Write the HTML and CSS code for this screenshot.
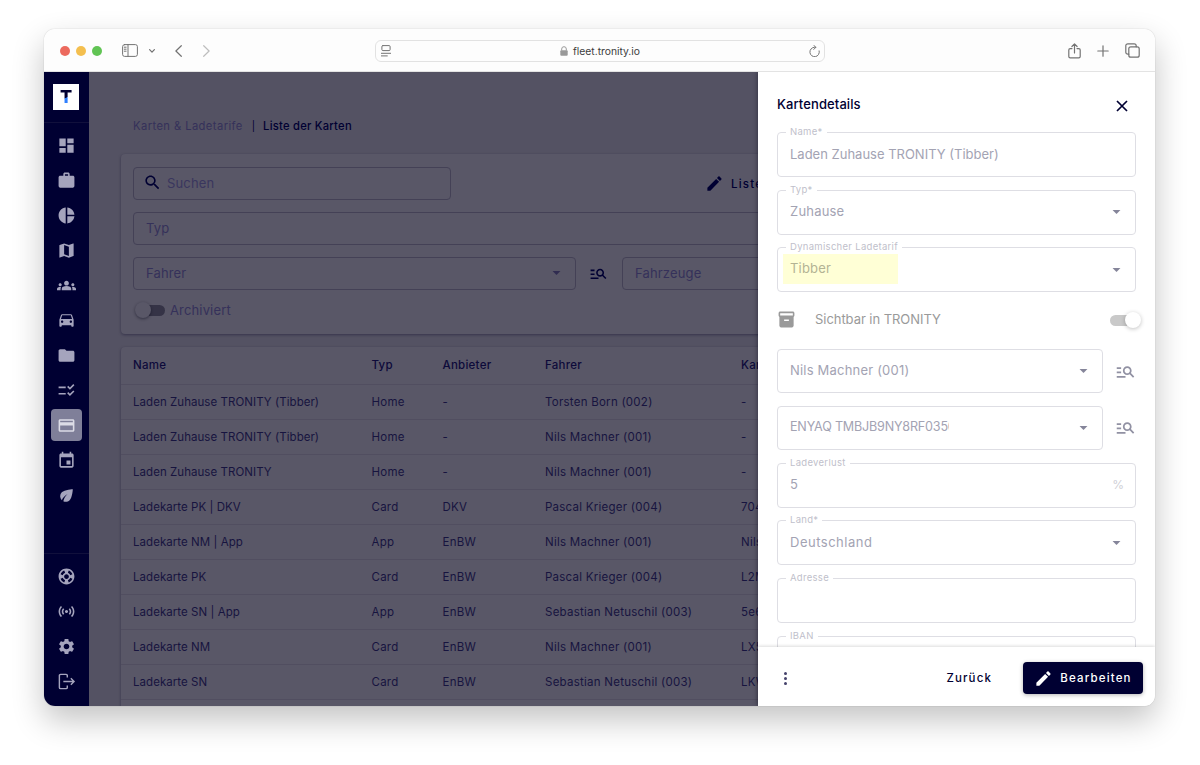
FILE: index.html
```
<!DOCTYPE html>
<html lang="de">
<head>
    <meta charset="UTF-8">
    <title>TRONITY Fleet - Liste der Karten</title>
    <link rel="stylesheet" href="styles.css">
</head>

<body>
<svg class="sprite" aria-hidden="true">
    <symbol id="edit" viewBox="0 0 24 24"><path d="M3 17.25V21h3.75L17.81 9.94l-3.75-3.75L3 17.25zM20.71 7.04c.39-.39.39-1.02 0-1.41l-2.34-2.34c-.39-.39-1.02-.39-1.41 0l-1.83 1.83 3.75 3.75 1.83-1.83z"/></symbol>
    <symbol id="manage-search" viewBox="0 0 24 24"><path d="M7 9H2V7h5v2zm0 3H2v2h5v-2zm13.59 7l-3.83-3.83c-.8.52-1.74.83-2.76.83-2.76 0-5-2.24-5-5s2.24-5 5-5 5 2.24 5 5c0 1.02-.31 1.96-.83 2.75L22 17.59 20.59 19zM17 11c0-1.65-1.35-3-3-3s-3 1.35-3 3 1.35 3 3 3 3-1.35 3-3zM2 19h10v-2H2v2z"/></symbol>
    <symbol id="arrow" viewBox="0 0 24 24"><path d="M7 10l5 5 5-5z"/></symbol>
</svg>

<div class="window">
    <header class="toolbar">
        <div class="toolbar-left">
            <span class="dot red"></span>
            <span class="dot yellow"></span>
            <span class="dot green"></span>
            <svg class="line panel-icon" viewBox="0 0 16 13"><rect x=".6" y=".6" width="14.8" height="11.8" rx="2"/><path d="M6 .6v11.8M2.3 3.2h1.8M2.3 5.2h1.8M2.3 7.2h1.8"/></svg>
            <svg class="line chevron" viewBox="0 0 6 4"><path d="M.6.6L3 3.2 5.4.6"/></svg>
            <svg class="line back" viewBox="0 0 7 12"><path d="M6.3.7L.9 6l5.4 5.3"/></svg>
            <svg class="line forward" viewBox="0 0 7 12"><path d="M.7.7L6.1 6 .7 11.3"/></svg>
        </div>
        <div class="address">
            <svg class="line reader" viewBox="0 0 10 12"><rect x=".9" y=".6" width="8.2" height="5" rx="1"/><path d="M.3 8.3h9.4M.3 10.9h6"/></svg>
            <span class="url">
                <svg class="lock" viewBox="0 0 8 10"><path d="M1.7 4.5V3a2.3 2.3 0 0 1 4.6 0v1.5" fill="none" stroke="#999" stroke-width="1"/><rect x=".3" y="4.2" width="7.4" height="5.6" rx="1"/></svg>
                fleet.tronity.io
            </span>
            <svg class="line reload" viewBox="0 0 11 12"><path d="M10.2 5.9A4.7 4.7 0 1 1 5.5 2.300h1.300M4.800.4l2.100 1.900-2.100 2.100"/></svg>
        </div>
        <div class="toolbar-right">
            <svg class="line share" viewBox="0 0 13 16"><path d="M4 5.6H2.2A1.4 1.4 0 0 0 .8 7v6.4c0 .8.6 1.4 1.4 1.4h8.6c.8 0 1.4-.6 1.4-1.4V7c0-.8-.6-1.4-1.4-1.4H9M6.5 10V1M3.9 3.5L6.5.9l2.6 2.6"/></svg>
            <svg class="line plus" viewBox="0 0 12 12"><path d="M6 .8v10.4M.8 6h10.4"/></svg>
            <svg class="line tabs" viewBox="0 0 15 15"><rect x="3.8" y="3.8" width="10.4" height="10.4" rx="2"/><path d="M3.8 11.2h-1a2 2 0 0 1-2-2V2.8a2 2 0 0 1 2-2h6.4a2 2 0 0 1 2 2v1"/></svg>
        </div>
    </header>

    <div class="app">
        <nav class="sidebar">
            <div class="logo-wrap"><div class="logo"><span>T</span></div></div>
            <div class="nav-main">
                <a class="nav-item"><svg viewBox="0 0 24 24"><path d="M3 13h8V3H3v10zm0 8h8v-6H3v6zm10 0h8V11h-8v10zm0-18v6h8V3h-8z"/></svg></a>
                <a class="nav-item"><svg viewBox="0 0 24 24"><path d="M20 6h-4V4c0-1.11-.89-2-2-2h-4c-1.11 0-2 .89-2 2v2H4c-1.11 0-1.99.89-1.99 2L2 19c0 1.11.89 2 2 2h16c1.11 0 2-.89 2-2V8c0-1.11-.89-2-2-2zm-6 0h-4V4h4v2z"/></svg></a>
                <a class="nav-item"><svg viewBox="0 0 24 24"><path d="M11 2v20c-5.07-.5-9-4.79-9-10s3.93-9.5 9-10zm2.03 0v8.99H22c-.47-4.74-4.24-8.52-8.97-8.99zm0 11.01V22c4.74-.47 8.5-4.25 8.97-8.99h-8.97z"/></svg></a>
                <a class="nav-item"><svg viewBox="0 0 24 24"><path d="M20.5 3l-.16.03L15 5.1 9 3 3.36 4.9c-.21.07-.36.25-.36.48V20.5c0 .28.22.5.5.5l.16-.03L9 18.9l6 2.1 5.64-1.9c.21-.07.36-.25.36-.48V3.5c0-.28-.22-.5-.5-.5zM15 19l-6-2.11V5l6 2.11V19z"/></svg></a>
                <a class="nav-item"><svg viewBox="0 0 24 24"><path d="M12 12.75c1.63 0 3.07.39 4.24.9 1.08.48 1.76 1.56 1.76 2.73V18H6v-1.61c0-1.18.68-2.26 1.76-2.73 1.17-.52 2.61-.91 4.24-.91zM4 13c1.1 0 2-.9 2-2s-.9-2-2-2-2 .9-2 2 .9 2 2 2zm1.13 1.1c-.37-.06-.74-.1-1.13-.1-.99 0-1.93.21-2.78.58C.48 14.9 0 15.62 0 16.43V18h4.5v-1.61c0-.83.23-1.61.63-2.29zM20 13c1.1 0 2-.9 2-2s-.9-2-2-2-2 .9-2 2 .9 2 2 2zm4 3.43c0-.81-.48-1.53-1.22-1.85-.85-.37-1.79-.58-2.78-.58-.39 0-.76.04-1.13.1.4.68.63 1.46.63 2.29V18H24v-1.57zM12 6c1.66 0 3 1.34 3 3s-1.34 3-3 3-3-1.34-3-3 1.34-3 3-3z"/></svg></a>
                <a class="nav-item"><svg viewBox="0 0 24 24"><path d="M18.92 5.01C18.72 4.42 18.16 4 17.5 4h-11c-.66 0-1.21.42-1.42 1.01L3 11v8c0 .55.45 1 1 1h1c.55 0 1-.45 1-1v-1h12v1c0 .55.45 1 1 1h1c.55 0 1-.45 1-1v-8l-2.08-5.99zM6.5 15c-.83 0-1.5-.67-1.5-1.5S5.67 12 6.5 12s1.5.67 1.5 1.5S7.33 15 6.5 15zm11 0c-.83 0-1.5-.67-1.5-1.5s.67-1.5 1.5-1.5 1.5.67 1.5 1.5-.67 1.5-1.5 1.5zM5 10l1.5-4.5h11L19 10H5z"/></svg></a>
                <a class="nav-item"><svg viewBox="0 0 24 24"><path d="M10 4H4c-1.1 0-1.99.9-1.99 2L2 18c0 1.1.9 2 2 2h16c1.1 0 2-.9 2-2V8c0-1.1-.9-2-2-2h-8l-2-2z"/></svg></a>
                <a class="nav-item"><svg viewBox="0 0 24 24"><path d="M11 7H2v2h9V7zM11 15H2v2h9v-2zM16.34 11l-3.54-3.54 1.41-1.41 2.12 2.12 4.24-4.24L22 5.34 16.34 11zm0 8l-3.54-3.54 1.41-1.41 2.12 2.12 4.24-4.24L22 13.34 16.34 19z"/></svg></a>
                <a class="nav-item active"><svg viewBox="0 0 24 24"><path d="M20 4H4c-1.11 0-1.99.89-1.99 2L2 18c0 1.11.89 2 2 2h16c1.11 0 2-.89 2-2V6c0-1.11-.89-2-2-2zm0 14H4v-6h16v6zm0-10H4V6h16v2z"/></svg></a>
                <a class="nav-item"><svg viewBox="0 0 24 24"><path d="M17 12h-5v5h5v-5zM16 1v2H8V1H6v2H5c-1.11 0-1.99.9-1.99 2L3 19c0 1.1.89 2 2 2h14c1.1 0 2-.9 2-2V5c0-1.1-.9-2-2-2h-1V1h-2zm3 18H5V8h14v11z"/></svg></a>
                <a class="nav-item"><svg viewBox="0 0 24 24"><path d="M6.05 8.05c-2.73 2.73-2.73 7.15-.02 9.88 1.47-3.4 4.09-6.24 7.36-7.93-2.77 2.34-4.71 5.61-5.39 9.32 2.6 1.23 5.8.78 7.95-1.37C19.43 14.47 20 4 20 4S9.53 4.57 6.05 8.05z"/></svg></a>
            </div>
            <div class="nav-bottom">
                <a class="nav-item"><svg viewBox="0 0 24 24"><path d="M12 2C6.48 2 2 6.48 2 12s4.48 10 10 10 10-4.48 10-10S17.52 2 12 2zm7.46 7.12l-2.78 1.15c-.51-1.36-1.58-2.44-2.95-2.94l1.15-2.78c2.1.8 3.77 2.47 4.58 4.57zM12 15c-1.66 0-3-1.34-3-3s1.34-3 3-3 3 1.34 3 3-1.34 3-3 3zM9.13 4.54l1.17 2.78c-1.38.5-2.47 1.59-2.98 2.97L4.54 9.13c.81-2.11 2.48-3.78 4.59-4.59zM4.54 14.87l2.78-1.15c.51 1.38 1.59 2.46 2.97 2.96l-1.17 2.78c-2.1-.81-3.77-2.48-4.58-4.59zm10.34 4.59l-1.15-2.78c1.37-.51 2.45-1.59 2.95-2.97l2.78 1.17c-.81 2.1-2.48 3.77-4.58 4.58z"/></svg></a>
                <a class="nav-item"><svg viewBox="0 0 24 24"><path d="M7.76 16.24C6.67 15.16 6 13.66 6 12s.67-3.16 1.76-4.24l1.42 1.42C8.45 9.9 8 10.9 8 12c0 1.1.45 2.1 1.17 2.83l-1.41 1.41zm8.48 0C17.33 15.16 18 13.66 18 12s-.67-3.16-1.76-4.24l-1.42 1.42C15.55 9.9 16 10.9 16 12c0 1.1-.45 2.1-1.17 2.83l1.41 1.41zM12 10c-1.1 0-2 .9-2 2s.9 2 2 2 2-.9 2-2-.9-2-2-2zm8 2c0 2.21-.9 4.21-2.35 5.65l1.42 1.42C20.88 17.26 22 14.76 22 12s-1.12-5.26-2.93-7.07l-1.42 1.42C19.1 7.79 20 9.79 20 12zM6.35 6.35L4.93 4.93C3.12 6.74 2 9.24 2 12s1.12 5.26 2.93 7.07l1.42-1.42C4.9 16.21 4 14.21 4 12s.9-4.21 2.35-5.65z"/></svg></a>
                <a class="nav-item"><svg viewBox="0 0 24 24"><path d="M19.14 12.94c.04-.3.06-.61.06-.94 0-.32-.02-.64-.07-.94l2.03-1.58c.18-.14.23-.41.12-.61l-1.92-3.32c-.12-.22-.37-.29-.59-.22l-2.39.96c-.5-.38-1.03-.7-1.62-.94l-.36-2.54c-.04-.24-.24-.41-.48-.41h-3.84c-.24 0-.43.17-.47.41l-.36 2.54c-.59.24-1.13.57-1.62.94l-2.39-.96c-.22-.08-.47 0-.59.22L2.74 8.87c-.12.21-.08.47.12.61l2.03 1.58c-.05.3-.09.63-.09.94s.02.64.07.94l-2.03 1.58c-.18.14-.23.41-.12.61l1.92 3.32c.12.22.37.29.59.22l2.39-.96c.5.38 1.03.7 1.62.94l.36 2.54c.05.24.24.41.48.41h3.84c.24 0 .44-.17.47-.41l.36-2.54c.59-.24 1.13-.56 1.62-.94l2.39.96c.22.08.47 0 .59-.22l1.92-3.32c.12-.22.07-.47-.12-.61l-2.01-1.58zM12 15.6c-1.98 0-3.6-1.62-3.6-3.6s1.62-3.6 3.6-3.6 3.6 1.62 3.6 3.6-1.62 3.6-3.6 3.6z"/></svg></a>
                <a class="nav-item"><svg class="logout" viewBox="0 0 24 24"><path d="M13 7V4.500A1.500 1.500 0 0 0 11.500 3H4.500A1.500 1.500 0 0 0 3 4.500v15A1.500 1.500 0 0 0 4.500 21h7a1.500 1.500 0 0 0 1.500-1.500V17M8 12h13.500M17.500 8l4 4-4 4"/></svg></a>
            </div>
        </nav>

        <main class="content">
            <div class="breadcrumb"><span class="parent">Karten &amp; Ladetarife</span><span class="sep">|</span><span class="current">Liste der Karten</span></div>

            <section class="card filters">
                <div class="filter-row">
                    <div class="box search">
                        <svg class="icon" viewBox="0 0 24 24"><path d="M15.5 14h-.79l-.28-.27C15.41 12.59 16 11.11 16 9.5 16 5.91 13.09 3 9.5 3S3 5.91 3 9.5 5.91 16 9.5 16c1.61 0 3.09-.59 4.23-1.57l.27.28v.79l5 4.99L20.49 19l-4.99-5zm-6 0C7.01 14 5 11.99 5 9.5S7.01 5 9.5 5 14 7.01 14 9.5 11.99 14 9.5 14z"/></svg>
                        <span>Suchen</span>
                    </div>
                    <div class="edit-list"><svg class="icon"><use href="#edit"/></svg><span>Liste</span></div>
                </div>
                <div class="filter-row"><div class="box full">Typ</div></div>
                <div class="filter-row">
                    <div class="box driver"><span>Fahrer</span><svg class="icon arrow"><use href="#arrow"/></svg></div>
                    <svg class="icon find"><use href="#manage-search"/></svg>
                    <div class="box vehicles">Fahrzeuge</div>
                </div>
                <div class="archive"><span class="switch off"></span><span>Archiviert</span></div>
            </section>

            <section class="card table">
                <div class="row head"><span>Name</span><span>Typ</span><span>Anbieter</span><span>Fahrer</span><span>Kar</span></div>
                <div class="row"><span>Laden Zuhause TRONITY (Tibber)</span><span>Home</span><span>-</span><span>Torsten Born (002)</span><span>-</span></div>
                <div class="row"><span>Laden Zuhause TRONITY (Tibber)</span><span>Home</span><span>-</span><span>Nils Machner (001)</span><span>-</span></div>
                <div class="row"><span>Laden Zuhause TRONITY</span><span>Home</span><span>-</span><span>Nils Machner (001)</span><span>-</span></div>
                <div class="row"><span>Ladekarte PK | DKV</span><span>Card</span><span>DKV</span><span>Pascal Krieger (004)</span><span>704</span></div>
                <div class="row"><span>Ladekarte NM | App</span><span>App</span><span>EnBW</span><span>Nils Machner (001)</span><span>Nils</span></div>
                <div class="row"><span>Ladekarte PK</span><span>Card</span><span>EnBW</span><span>Pascal Krieger (004)</span><span>L2M</span></div>
                <div class="row"><span>Ladekarte SN | App</span><span>App</span><span>EnBW</span><span>Sebastian Netuschil (003)</span><span>5e6</span></div>
                <div class="row"><span>Ladekarte NM</span><span>Card</span><span>EnBW</span><span>Nils Machner (001)</span><span>LX5</span></div>
                <div class="row"><span>Ladekarte SN</span><span>Card</span><span>EnBW</span><span>Sebastian Netuschil (003)</span><span>LKW</span></div>
                <div class="row"></div>
            </section>
        </main>

        <aside class="drawer">
            <div class="drawer-head">
                <h1>Kartendetails</h1>
                <svg class="close" viewBox="0 0 12 12"><path d="M1 1l10 10M11 1L1 11"/></svg>
            </div>
            <div class="form">
                <div class="field"><label>Name*</label><span class="value long">Laden Zuhause TRONITY (Tibber)</span></div>
                <div class="field"><label>Typ*</label><span class="value">Zuhause</span><svg class="icon arrow"><use href="#arrow"/></svg></div>
                <div class="field"><label>Dynamischer Ladetarif</label><mark>Tibber</mark><svg class="icon arrow"><use href="#arrow"/></svg></div>
                <div class="visible">
                    <svg class="icon" viewBox="0 0 24 24"><path d="M20 2H4c-1 0-2 .9-2 2v3.010c0 .72.43 1.340 1 1.690V20c0 1.100 1.100 2 2 2h14c.9 0 2-.9 2-2V8.700c.57-.35 1-.97 1-1.690V4c0-1.100-1-2-2-2zm-5 12H9v-2h6v2zm5-7H4V4l16-.02V7z"/></svg>
                    <span>Sichtbar in TRONITY</span>
                    <span class="switch on"></span>
                </div>
                <div class="field-row">
                    <div class="field"><span class="value">Nils Machner (001)</span><svg class="icon arrow"><use href="#arrow"/></svg></div>
                    <svg class="icon find"><use href="#manage-search"/></svg>
                </div>
                <div class="field-row">
                    <div class="field"><span class="value clipped">ENYAQ TMBJB9NY8RF0350</span><svg class="icon arrow"><use href="#arrow"/></svg></div>
                    <svg class="icon find"><use href="#manage-search"/></svg>
                </div>
                <div class="field"><label>Ladeverlust</label><span class="value">5</span><span class="unit">%</span></div>
                <div class="field"><label>Land*</label><span class="value wide">Deutschland</span><svg class="icon arrow"><use href="#arrow"/></svg></div>
                <div class="field"><label>Adresse</label></div>
                <div class="field"><label>IBAN</label></div>
            </div>
            <footer class="actions">
                <span class="more"><i></i><i></i><i></i></span>
                <button class="btn">Zurück</button>
                <button class="btn primary"><svg class="icon"><use href="#edit"/></svg>Bearbeiten</button>
            </footer>
        </aside>
    </div>
</div>
</body>
</html>
```
FILE: styles.css
```
* {
    box-sizing: border-box;
}

body {
    margin: 0;
    height: 765px;
    overflow: hidden;
    padding: 29px 0 0 44px;
    background: #fff;
    font-family: Inter, "Open Sans", sans-serif;
    color: #000032;
}

svg {
    display: block;
    flex: none;
    fill: currentColor;
}

.sprite {
    display: none;
}

.window {
    width: 1111px;
    height: 677px;
    border-radius: 11px;
    overflow: hidden;
    box-shadow: 0 0 1px rgba(0, 0, 0, 0.35), 0 14px 32px rgba(0, 0, 0, 0.24);
}

/* browser toolbar */
.toolbar {
    height: 43px;
    display: grid;
    grid-template-columns: 331px 450px 1fr;
    align-items: center;
    background: #fdfdfd;
    border-bottom: 1px solid #e3e3e3;
    padding-top: 1px;
}

.line {
    fill: none;
    stroke: #737373;
    stroke-width: 1.2;
    stroke-linecap: round;
    stroke-linejoin: round;
}

.toolbar-left {
    display: flex;
    align-items: center;
    padding-left: 16px;
}

.dot {
    width: 10px;
    height: 10px;
    margin-right: 6px;
    border-radius: 50%;
}

.red { background: #ec6a5e; }
.yellow { background: #f4bf4f; }
.green { background: #61c454; }

.panel-icon {
    width: 16px;
    height: 13px;
    margin-left: 14px;
    stroke-width: 1;
}

.chevron {
    width: 6px;
    height: 4px;
    margin-left: 11px;
}

.back {
    width: 7px;
    height: 12px;
    margin-left: 20px;
}

.forward {
    width: 7px;
    height: 12px;
    margin-left: 21px;
    stroke: #bdbdbd;
}

.address {
    height: 22px;
    display: flex;
    align-items: center;
    justify-content: space-between;
    padding: 0 4px 0 5px;
    border: 1px solid #e2e2e2;
    border-radius: 6px;
}

.reader {
    width: 10px;
    height: 12px;
    stroke-width: 1;
}

.url {
    display: flex;
    align-items: center;
    gap: 5px;
    font-size: 10.3px;
    color: #3c3c3c;
}

.lock {
    width: 8px;
    height: 10px;
    fill: #999;
}

.reload {
    width: 11px;
    height: 12px;
    stroke-width: 1;
}

.toolbar-right {
    display: flex;
    align-items: center;
    justify-content: flex-end;
    padding-right: 15px;
}

.share { width: 13px; height: 16px; }
.plus { width: 12px; height: 12px; margin-left: 16px; }
.tabs { width: 15px; height: 15px; margin-left: 16px; }

.app {
    display: flex;
    height: 634px;
    overflow: hidden;
}

/* sidebar */
.sidebar {
    width: 45px;
    display: flex;
    flex-direction: column;
    background: #000032;
    color: #a5a4bd;
}

.logo-wrap {
    height: 51px;
    padding: 12px 0 0 9px;
    border-bottom: 1px solid #11103c;
}

.logo {
    width: 26px;
    height: 26px;
    display: grid;
    place-items: center;
    background: #fff;
}

.logo span {
    font-size: 18px;
    line-height: 20px;
    font-weight: 800;
    color: transparent;
    background: linear-gradient(155deg, #000032 52%, #2f80ff 54%);
    background-clip: text;
    -webkit-background-clip: text;
}

.nav-main {
    flex: 1;
    display: flex;
    flex-direction: column;
    align-items: center;
    gap: 3px;
    padding-top: 6px;
}

.nav-bottom {
    height: 153px;
    display: flex;
    flex-direction: column;
    align-items: center;
    gap: 3px;
    padding-top: 6px;
    border-top: 1px solid #11103c;
}

.nav-item {
    width: 31px;
    height: 32px;
    display: grid;
    place-items: center;
    border-radius: 4px;
}

.nav-item svg {
    width: 19px;
    height: 19px;
}

.nav-item.active {
    background: #7f7f99;
    color: #dcdce6;
}

.nav-item .logout {
    fill: none;
    stroke: currentColor;
    stroke-width: 1.8;
}

/* page behind the drawer */
.content {
    width: 669px;
    overflow: hidden;
    padding-left: 32px;
    background: #545263;
    color: #17143f;
}

.breadcrumb {
    display: flex;
    height: 82px;
    padding: 46px 0 0 12px;
    font-size: 11.2px;
    line-height: 16px;
    white-space: nowrap;
}

.parent { color: #35315a; letter-spacing: 0.42px; }
.sep { margin: 0 8px 0 9px; font-size: 10px; color: #000032; }
.current { color: #000032; font-weight: 500; letter-spacing: 0.25px; }

.card {
    width: 1000px;
    border-radius: 4px;
    background: #595767;
    box-shadow: 0 1px 3px rgba(10, 8, 40, 0.4);
}

.filters {
    height: 180px;
    padding: 13px 12px 0;
    margin-bottom: 13px;
}

.filter-row {
    display: flex;
    align-items: center;
    height: 33px;
    margin-bottom: 12px;
}

.box {
    height: 33px;
    display: flex;
    align-items: center;
    padding: 0 12px 2px;
    border: 1px solid #444156;
    border-radius: 4px;
    font-size: 13px;
    letter-spacing: 0.15px;
    color: #35315a;
}

.icon {
    width: 19px;
    height: 19px;
}

.search {
    width: 318px;
    padding-left: 9px;
    gap: 5px;
}

.search .icon { color: #000032; }
.search span { color: #3a365e; }

.edit-list {
    display: flex;
    align-items: center;
    gap: 7px;
    margin-left: 254px;
    font-size: 11.5px;
    font-weight: 500;
    letter-spacing: 1.2px;
    white-space: nowrap;
    color: #000032;
}

.full { flex: 1; }

.driver {
    width: 443px;
    padding-right: 9px;
    justify-content: space-between;
}

.filters .find {
    margin: 0 14px 0 13px;
    color: #000032;
}

.filters .arrow { color: #302c50; }
.vehicles { flex: 1; }

.archive {
    display: flex;
    align-items: center;
    gap: 4px;
    margin-top: -2px;
    font-size: 13px;
    letter-spacing: 0.15px;
    color: #35315a;
}

.switch {
    position: relative;
    width: 33px;
    height: 20px;
    display: flex;
    align-items: center;
}

.switch::before {
    content: "";
    width: 24px;
    height: 11px;
    margin-left: 8px;
    border-radius: 6px;
    background: #353346;
}

.switch::after {
    content: "";
    position: absolute;
    top: 2px;
    left: 2px;
    width: 16px;
    height: 16px;
    border-radius: 50%;
    background: #595767;
    box-shadow: 0 1px 3px rgba(0, 0, 20, 0.45);
}

/* card table */
.table {
    font-size: 11.5px;
}

.row {
    display: grid;
    grid-template-columns: 238.5px 71px 102.5px 196px 1fr;
    align-items: center;
    height: 35px;
    padding: 0 0 1px 12px;
    border-bottom: 1px solid #514e60;
    white-space: nowrap;
    letter-spacing: 0.25px;
}

.row span:first-child {
    letter-spacing: 0.05px;
}

.row.head {
    height: 38px;
    font-weight: 500;
    color: #0d0a3a;
}

.head span:first-child {
    letter-spacing: 0.25px;
}

/* detail drawer */
.drawer {
    position: relative;
    width: 397px;
    display: flex;
    flex-direction: column;
    background: #fff;
    box-shadow: -1px 0 4px rgba(0, 0, 20, 0.35);
}

.drawer-head {
    display: flex;
    justify-content: space-between;
    height: 60px;
    padding: 22px 27px 0 19px;
}

.drawer-head h1 {
    margin: 0;
    font-size: 13px;
    line-height: 20px;
    font-weight: 500;
    letter-spacing: 0.1px;
}

.close {
    width: 12px;
    height: 12px;
    margin-top: 6px;
    stroke: #000032;
    stroke-width: 1.7;
}

.form {
    flex: 1;
    min-height: 0;
    overflow: hidden;
    display: flex;
    flex-direction: column;
    gap: 12.7px;
    margin-top: -8px;
    padding: 8px 19px 0;
    font-size: 13px;
    color: #a3a3b3;
}

.field {
    position: relative;
    flex: none;
    height: 45px;
    display: flex;
    align-items: center;
    justify-content: space-between;
    padding: 0 9px 1px 12px;
    border: 1px solid #dedee4;
    border-radius: 4px;
}

.field label {
    position: absolute;
    top: -8px;
    left: 8px;
    padding: 0 4px;
    background: #fff;
    font-size: 9.5px;
    line-height: 14px;
    letter-spacing: 0.3px;
    color: #bfbfcb;
}

.field mark {
    display: flex;
    align-items: center;
    width: 115px;
    height: 30px;
    margin-left: -7px;
    padding: 0 0 2px 7px;
    background: #ffffd6;
    color: #b3b394;
    letter-spacing: 0.2px;
}

.value {
    padding-bottom: 1px;
    white-space: nowrap;
    letter-spacing: 0.2px;
}

.long { letter-spacing: 0; }
.wide { letter-spacing: 0.5px; }

.clipped {
    width: 159px;
    overflow: hidden;
    font-size: 12.6px;
    letter-spacing: -0.2px;
}

.form .arrow { color: #85859a; }

.unit {
    margin-right: 2px;
    font-size: 12px;
    color: #cfcfd6;
}

.visible {
    flex: none;
    height: 31.5px;
    display: flex;
    align-items: center;
    padding-bottom: 3px;
    letter-spacing: -0.05px;
    color: #9a9a9a;
}

.visible .icon { margin-right: 19px; }

.on {
    margin: 2px -7px 0 auto;
}

.on::before {
    margin-left: 0;
    background: #c9c9c9;
}

.on::after {
    left: 15px;
    background: #fff;
    box-shadow: 0 1px 4px rgba(0, 0, 0, 0.25);
}

.field-row {
    flex: none;
    display: flex;
    align-items: center;
    justify-content: space-between;
}

.field-row .field {
    width: 326px;
    height: 44px;
}

.field-row .find {
    width: 21px;
    height: 21px;
    color: #9191a3;
}

.actions {
    position: relative;
    display: flex;
    align-items: center;
    height: 59px;
    padding: 3px 12px 0 26px;
    background: #fff;
    box-shadow: 0 -1px 3px rgba(0, 0, 0, 0.14);
}

.more {
    display: flex;
    flex-direction: column;
    gap: 2px;
    margin-right: auto;
}

.more i {
    width: 3px;
    height: 3px;
    border-radius: 50%;
    background: #45426b;
}

.btn {
    height: 32px;
    display: flex;
    align-items: center;
    padding: 0;
    margin-right: 31px;
    border: none;
    background: none;
    font: 500 11.5px Inter, sans-serif;
    letter-spacing: 1.15px;
    color: #000032;
}

.btn.primary {
    width: 120px;
    gap: 7px;
    justify-content: center;
    margin-right: 0;
    border-radius: 4px;
    background: #000032;
    color: #fff;
    box-shadow: 0 1px 4px rgba(0, 0, 0, 0.3);
}
```
